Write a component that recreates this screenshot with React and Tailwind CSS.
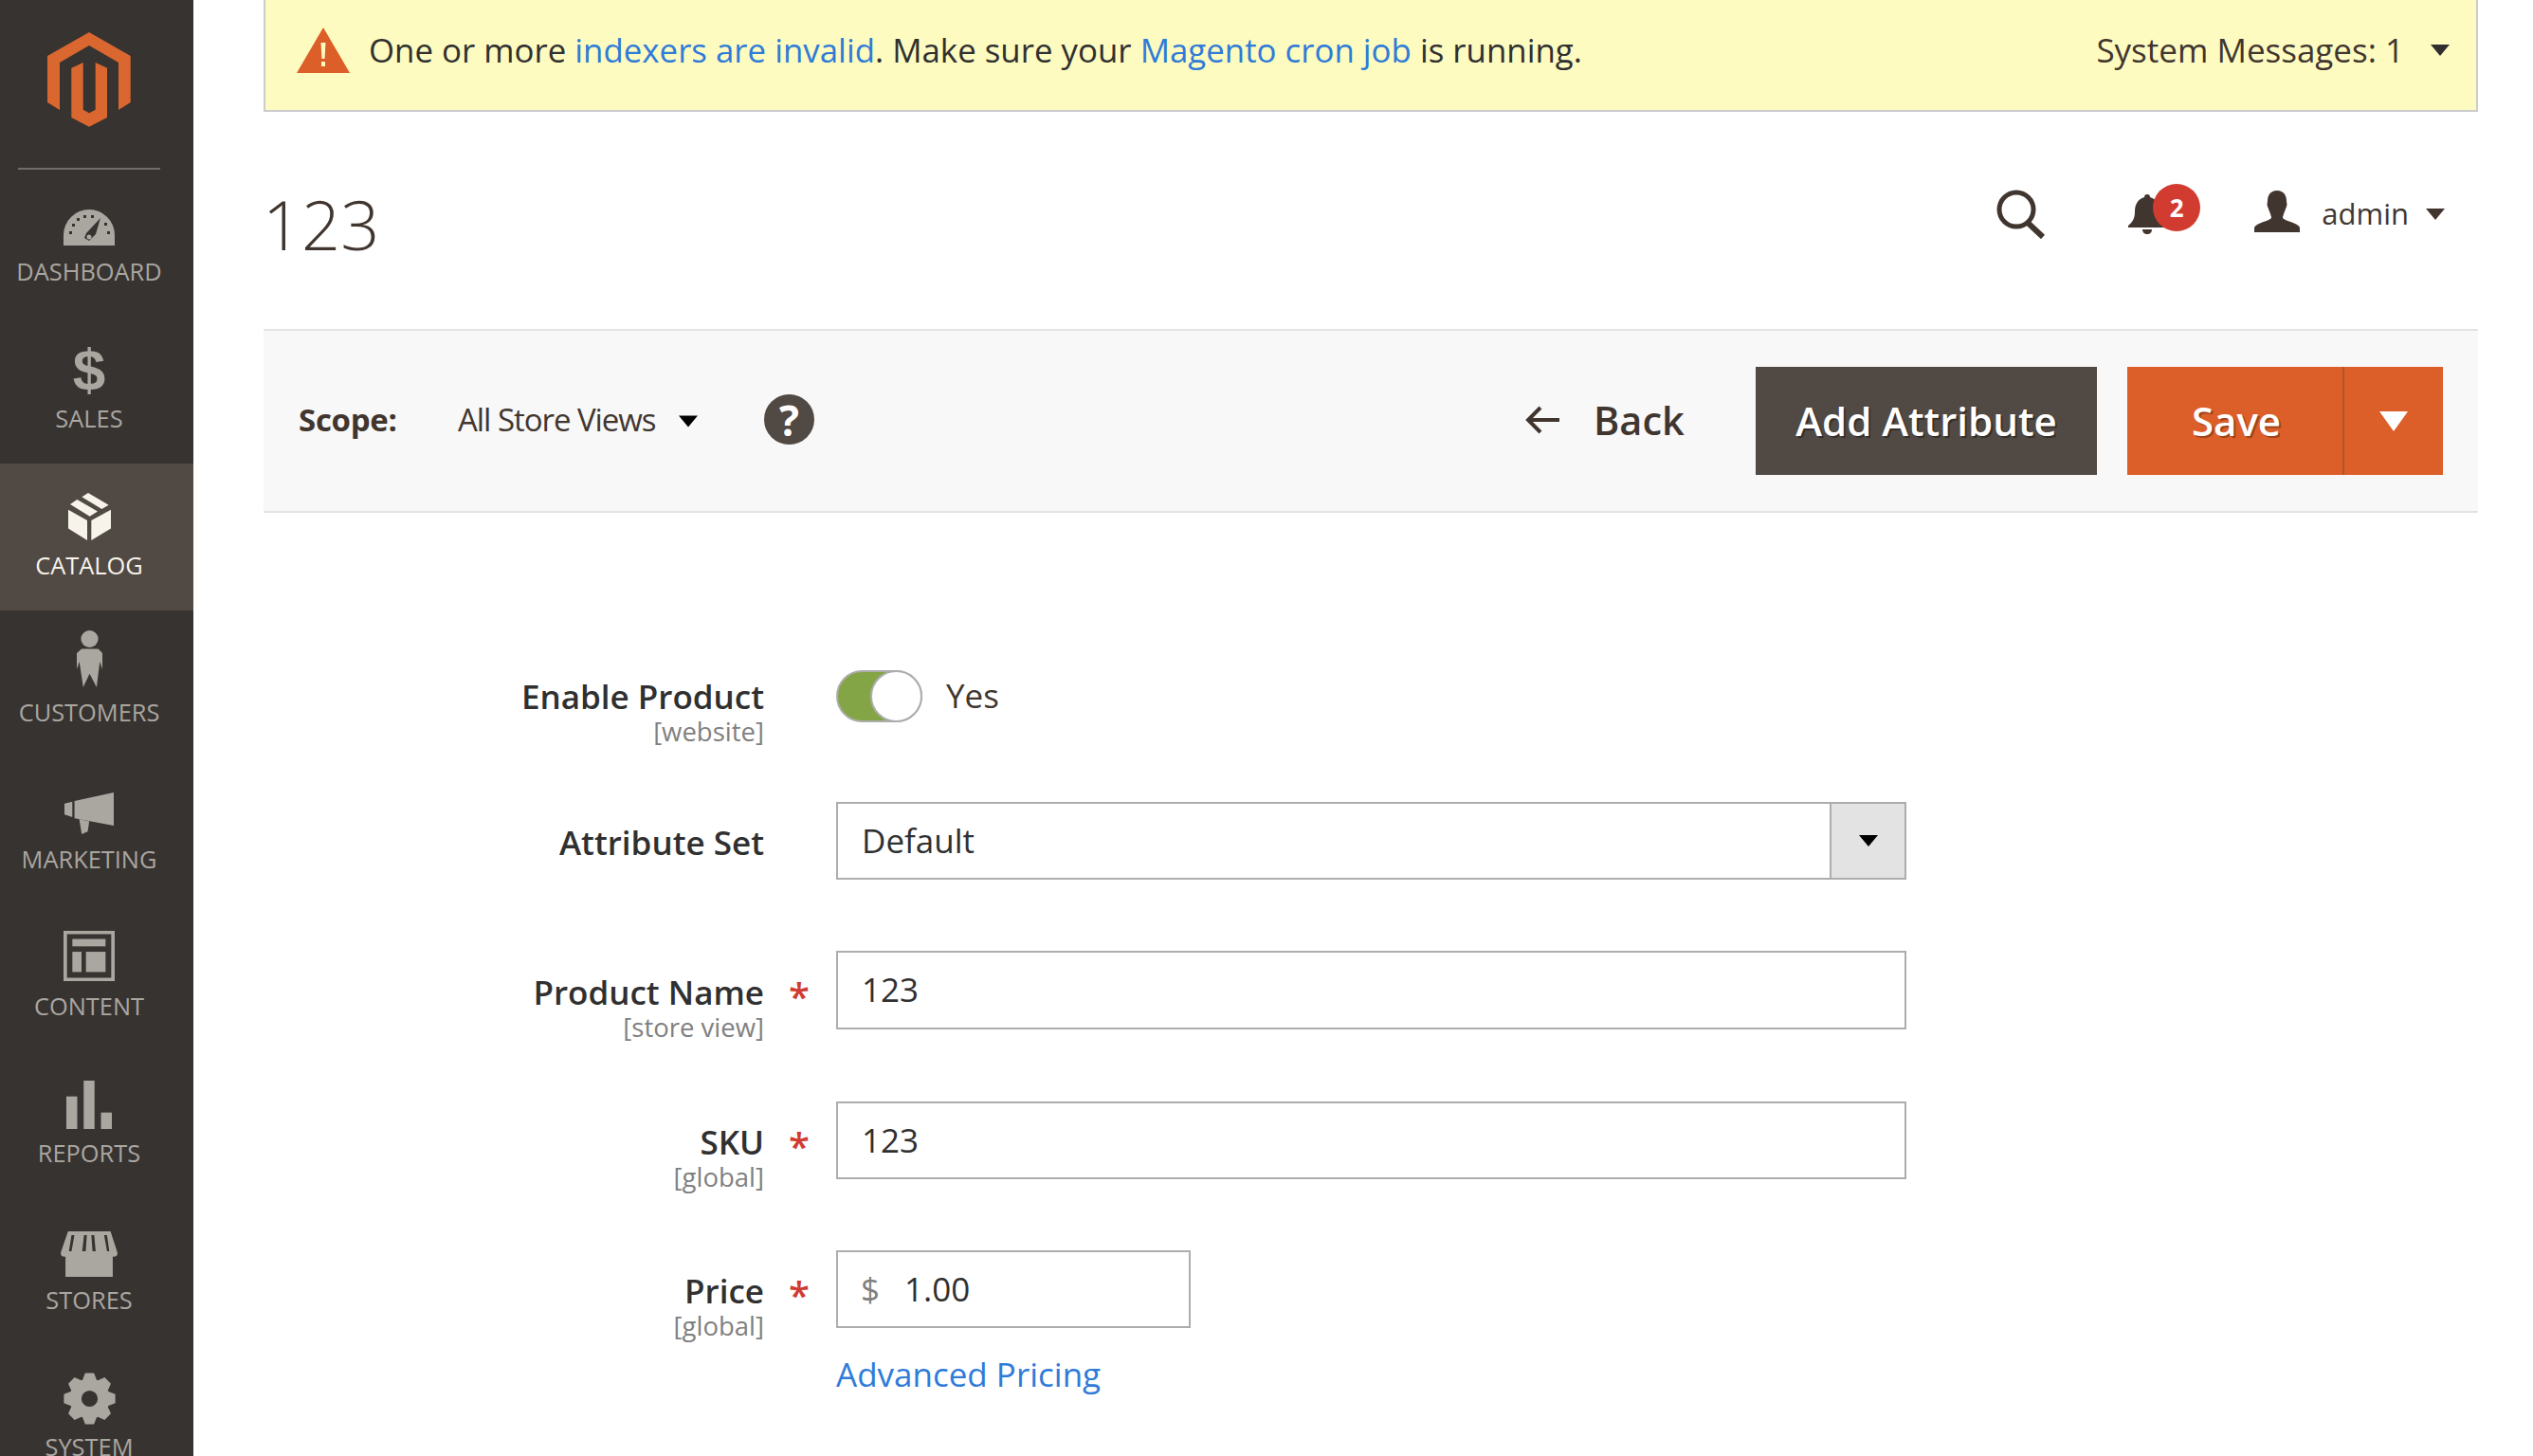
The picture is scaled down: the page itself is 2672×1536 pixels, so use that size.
import React from 'react';

const gearPoints = () => {
  const pts = [];
  const cx = 83;
  const cy = 83;
  for (let i = 0; i < 8; i++) {
    const a = (i * Math.PI) / 4 - Math.PI / 2;
    const add = (r, d) => {
      const x = cx + r * Math.cos(a + d);
      const y = cy + r * Math.sin(a + d);
      pts.push(`${x.toFixed(1)},${y.toFixed(1)}`);
    };
    add(64, -0.36);
    add(83, -0.17);
    add(83, 0.17);
    add(64, 0.36);
  }
  return pts.join(' ');
};

const Logo = () => (
  <svg width="88" height="100" viewBox="50 34 88 100" fill="#d9672f">
    <polygon points="94,34 137.7,59 137.7,108 125,116 125,66 94,48 63,66 63,116 50,108 50,59" />
    <polygon points="75.3,71.7 87.7,66 87.7,115.7 94,119.3 100.7,115.7 100.7,66 113,71.7 113,124 94,133.7 75.3,124" />
  </svg>
);

const DashboardIcon = ({ c }) => (
  <svg width="54" height="38" viewBox="0 0 54 38">
    <path fill={c} d="M0 38V27A27 27 0 0 1 54 27V38Z" />
    <g fill="#373330">
      <rect x="6" y="23" width="3" height="3" />
      <rect x="9" y="15" width="3" height="3" />
      <rect x="14" y="9" width="3" height="3" />
      <rect x="21" y="6" width="3" height="3" />
      <rect x="29" y="6" width="3" height="3" />
      <rect x="43" y="14" width="3" height="3" />
      <rect x="46" y="23" width="3" height="3" />
      <polygon points="39,9 34,26 27,33 22,30 24,25" />
    </g>
    <circle cx="27" cy="29" r="2.5" fill={c} />
  </svg>
);

const CatalogIcon = ({ c }) => (
  <svg width="45" height="50" viewBox="212 112 135 141" preserveAspectRatio="none" fill={c}>
    <polygon points="212,162 272,194 272,253 212,218" />
    <polygon points="285,194 347,162 347,218 285,253" />
    <polygon points="275,112 340,148 318,160 255,124" />
    <polygon points="240,132 305,167 280,182 218,146" />
  </svg>
);

const CustomersIcon = ({ c }) => (
  <svg width="27" height="60" viewBox="245 518 80 167" preserveAspectRatio="none" fill={c}>
    <ellipse cx="285" cy="543" rx="27" ry="25" />
    <polygon points="260,572 312,572 325,585 325,632 317,610 307,685 285,645 265,685 253,610 245,632 245,585" />
  </svg>
);

const MarketingIcon = ({ c }) => (
  <svg width="52" height="44" viewBox="203 997 157 123" preserveAspectRatio="none" fill={c}>
    <polygon points="235,1022 360,997 360,1095 235,1073" />
    <polygon points="203,1030 228,1024 228,1070 203,1062" />
    <polygon points="250,1075 282,1082 277,1112 258,1120" />
  </svg>
);

const ContentIcon = ({ c }) => (
  <svg width="54" height="53" viewBox="201 1406 162 149" preserveAspectRatio="none" fill={c}>
    <path fillRule="evenodd" d="M201 1406H363V1555H201ZM212 1416V1545H352V1416Z" />
    <rect x="229" y="1430" width="105" height="22" />
    <rect x="229" y="1468" width="29" height="60" />
    <rect x="272" y="1468" width="62" height="60" />
  </svg>
);

const ReportsIcon = ({ c }) => (
  <svg width="48" height="51" viewBox="211 300 142 153" preserveAspectRatio="none" fill={c}>
    <rect x="211" y="350" width="34" height="103" />
    <rect x="265" y="300" width="34" height="153" />
    <rect x="319" y="401" width="34" height="52" />
  </svg>
);

const StoresIcon = ({ c }) => (
  <svg width="60" height="48" viewBox="192 778 178 142" preserveAspectRatio="none">
    <polygon fill={c} points="207,840 355,840 355,920 207,920" />
    <path fill={c} d="M215 778H348L370 845Q370 857 358 857Q347 857 345 845L337 790H328L338 845Q338 857 322 857Q305 857 302 845L297 790H288L292 845Q292 857 281 857Q270 857 270 845L274 790H265L259 845Q258 857 243 857Q226 857 225 845L235 790H226L217 845Q215 857 204 857Q192 857 192 845Z" />
  </svg>
);

const SystemIcon = ({ c }) => (
  <svg width="55" height="55" viewBox="0 0 166 166">
    <path fill={c} fillRule="evenodd" d={`M${gearPoints().split(' ').join('L')}Z M57 83a26 26 0 1 0 52 0a26 26 0 1 0 -52 0Z`} />
  </svg>
);

const SalesIcon = ({ c }) => (
  <span
    className="font-['Liberation_Sans',sans-serif] font-bold text-[62px] leading-[60px] h-[60px] block"
    style={{ color: c }}
  >
    $
  </span>
);

const navItems = [
  { label: 'DASHBOARD', Icon: DashboardIcon, box: 'h-[80px]', gap: 'mt-[10px]' },
  { label: 'SALES', Icon: SalesIcon, box: 'h-[86px]', gap: 'mt-[4px]' },
  { label: 'CATALOG', Icon: CatalogIcon, box: 'h-[81px]', gap: 'mt-[9px]', active: true },
  { label: 'CUSTOMERS', Icon: CustomersIcon, box: 'h-[81px]', gap: 'mt-[9px]' },
  { label: 'MARKETING', Icon: MarketingIcon, box: 'h-[81px]', gap: 'mt-[9px]' },
  { label: 'CONTENT', Icon: ContentIcon, box: 'h-[81px]', gap: 'mt-[9px]' },
  { label: 'REPORTS', Icon: ReportsIcon, box: 'h-[82px]', gap: 'mt-[8px]' },
  { label: 'STORES', Icon: StoresIcon, box: 'h-[83px]', gap: 'mt-[7px]' },
  { label: 'SYSTEM', Icon: SystemIcon, box: 'h-[84px]', gap: 'mt-[6px]' },
];

const Caret = ({ className }) => (
  <svg className={className} viewBox="0 0 20 12" fill="currentColor">
    <polygon points="0,0 20,0 10,12" />
  </svg>
);

const Sidebar = () => (
  <aside className="w-[204px] shrink-0 bg-[#373330]">
    <div className="h-[179px] pt-[34px] pl-[50px] pr-[35px] flex flex-col">
      <Logo />
      <div className="mt-auto -ml-[31px] w-[150px] h-[2px] bg-[#736d68]" />
    </div>
    {navItems.map(({ label, Icon, box, gap, active }) => (
      <div
        key={label}
        className={`h-[155px] pr-[16px] flex flex-col items-center ${active ? 'bg-[#514943] text-[#f7f3eb]' : 'text-[#aaa6a0]'}`}
      >
        <div className={`${box} flex items-end justify-center`}>
          <Icon c={active ? '#f7f3eb' : '#aaa6a0'} />
        </div>
        <span className={`text-[25.4px] leading-[34px] ${gap}`}>{label}</span>
      </div>
    ))}
  </aside>
);

const Notice = () => (
  <div className="h-[118px] flex items-center justify-between bg-[#fdfbc0] border-x-2 border-b-2 border-[#cccccc] pl-[33px] pr-[28px] pb-[10px]">
    <div className="flex items-center">
      <svg width="56" height="48" viewBox="0 0 56 48" className="mr-[20px]">
        <polygon fill="#dc5e28" points="28,0 56,48 0,48" />
        <polygon fill="#fdfbc0" points="25.5,16 30.5,16 29.5,33 26.5,33" />
        <rect x="26" y="36" width="4" height="5" fill="#fdfbc0" />
      </svg>
      <p className="text-[34.85px] text-[#303030]">
        One or more <a className="text-[#2f7bd8]">indexers are invalid</a>. Make sure your{' '}
        <a className="text-[#2f7bd8]">Magento cron job</a> is running.
      </p>
    </div>
    <div className="flex items-center text-[#41362f]">
      <span className="text-[35px]">System Messages: 1</span>
      <Caret className="w-[20px] h-[12px] ml-[28px] text-[#303030]" />
    </div>
  </div>
);

const PageHeader = () => (
  <div className="h-[229px] flex justify-between -ml-[1px] pr-[35px]">
    <h1 className="text-[72px] font-[350] text-[#41362f] leading-[100px] mt-[68px]">123</h1>
    <div className="flex items-start pt-[77px] text-[#41362f]">
      <svg width="52" height="52" viewBox="0 0 52 52" className="mt-[5px]" fill="none" stroke="currentColor">
        <circle cx="21" cy="21" r="18" strokeWidth="5" />
        <path d="M32 34L49 50" strokeWidth="6" />
      </svg>
      <div className="relative ml-[87px] mt-[10px] w-[40px] h-[42px]">
        <svg width="40" height="42" viewBox="0 0 40 42" fill="currentColor">
          <path d="M20 0C22 0 23 1 23 3C30 5 33 11 33 18C33 25 35 29 40 33V35H0V33C5 29 7 25 7 18C7 11 10 5 17 3C17 1 18 0 20 0Z" />
          <path d="M15 37H25C25 40 23 42 20 42C17 42 15 40 15 37Z" />
        </svg>
        <span className="absolute left-[26px] -top-[11px] w-[50px] h-[50px] rounded-full bg-[#d13b30] text-white font-bold text-[26px] flex items-center justify-center">
          2
        </span>
      </div>
      <svg width="48" height="44" viewBox="0 0 48 44" className="ml-[93px] mt-[6px]" fill="currentColor">
        <path d="M24 0C31 0 34 5 34 11C34 13 35 14 34 17C33 19 33 20 32 22C31 25 30 27 30 29C32 32 46 34 48 39V44H0V39C2 34 16 32 18 29C18 27 17 25 16 22C15 20 15 19 14 17C13 14 14 13 14 11C14 5 17 0 24 0Z" />
      </svg>
      <span className="ml-[23px] text-[31px] leading-[40px] mt-[10px]">admin</span>
      <Caret className="w-[20px] h-[12px] ml-[18px] mt-[25px]" />
    </div>
  </div>
);

const Toolbar = () => (
  <div className="h-[194px] flex items-center justify-between bg-[#f8f8f8] border-y-2 border-[#e3e3e3] pl-[37px] pr-[37px] text-[#41362f]">
    <div className="flex items-center">
      <span className="text-[33px] font-bold w-[168px] tracking-[-0.3px] -mt-[3px]">Scope:</span>
      <span className="text-[33px] tracking-[-1.05px] w-[207px] -mt-[3px] whitespace-nowrap">All Store Views</span>
      <Caret className="w-[20px] h-[13px] ml-[26px] mt-[1px] text-black" />
      <span className="ml-[70px] -mt-[3px] w-[53px] h-[53px] rounded-full bg-[#514943] text-white font-bold text-[44px] flex items-center justify-center">
        ?
      </span>
    </div>
    <div className="flex items-center">
      <svg width="36" height="30" viewBox="0 0 36 30" fill="none" stroke="currentColor" strokeWidth="4" className="-mt-[2px]">
        <path d="M36 15H4M16 2L3 15L16 28" />
      </svg>
      <span className="ml-[36px] text-[41.5px] font-semibold w-[171px] -mt-[2px]">Back</span>
      <button className="h-[114px] w-[360px] pb-[2px] bg-[#514943] text-white text-[42px] font-semibold [text-shadow:2px_2px_0_rgba(0,0,0,0.35)]">
        Add Attribute
      </button>
      <div className="ml-[32px] h-[114px] flex bg-[#dc5e28] text-white">
        <button className="w-[229px] pb-[2px] pl-[3px] text-[42px] font-semibold [text-shadow:2px_2px_0_rgba(0,0,0,0.3)] border-r-2 border-[#b3552a]">
          Save
        </button>
        <span className="w-[104px] flex items-center justify-center">
          <svg width="30" height="21" viewBox="0 0 30 21" fill="currentColor">
            <polygon points="0,0 30,0 15,21" />
          </svg>
        </span>
      </div>
    </div>
  </div>
);

const Row = ({ label, scope, required, top, pt, children }) => (
  <div className={`flex ${top}`}>
    <div className={`w-[528px] shrink-0 text-right ${pt}`}>
      <div className="text-[35px] leading-[40px] font-semibold text-[#303030]">{label}</div>
      {scope && <div className="text-[27.5px] leading-[33px] text-[#808080]">{scope}</div>}
    </div>
    <div className={`w-[76px] shrink-0 pl-[26px] ${pt} text-[40px] leading-[48px] font-semibold text-[#d13b30]`}>
      {required ? '*' : ''}
    </div>
    {children}
  </div>
);

const fieldCls =
  'h-[82px] border-2 border-[#adadad] flex items-center text-[35px] text-[#303030] bg-white';

const Form = () => (
  <div>
    <Row label="Enable Product" scope="[website]" top="mt-[166px]" pt="pt-[8px]">
      <div className="flex items-center h-[55px]">
        <div className="relative w-[91px] h-[55px] rounded-full bg-[#84a546] border-2 border-[#adadad]">
          <span className="absolute right-[-2px] top-[-2px] w-[55px] h-[55px] rounded-full bg-white border-2 border-[#adadad]" />
        </div>
        <span className="ml-[25px] text-[35px] text-[#41362f]">Yes</span>
      </div>
    </Row>
    <Row label="Attribute Set" top="mt-[58px]" pt="pt-[23px]">
      <div className={`${fieldCls} w-[1129px] pl-[25px] justify-between`}>
        <span>Default</span>
        <span className="w-[79px] h-full bg-[#e3e3e3] border-l-2 border-[#adadad] flex items-center justify-center">
          <Caret className="w-[20px] h-[12px] text-black" />
        </span>
      </div>
    </Row>
    <Row label="Product Name" scope="[store view]" required top="mt-[75px]" pt="pt-[24px]">
      <div className={`${fieldCls} w-[1129px] pl-[25px] !h-[83px]`}>123</div>
    </Row>
    <Row label="SKU" scope="[global]" required top="mt-[62px]" pt="pt-[23px]">
      <div className={`${fieldCls} w-[1129px] pl-[25px]`}>123</div>
    </Row>
    <Row label="Price" scope="[global]" required top="mt-[61px]" pt="pt-[23px]">
      <div>
        <div className={`${fieldCls} w-[374px] pl-[24px]`}>
          <span className="text-[#808080] mr-[26px]">$</span>1.00
        </div>
        <a className="block mt-[27px] text-[35px] leading-[44px] text-[#2f7bd8]">Advanced Pricing</a>
      </div>
    </Row>
  </div>
);

export default function App() {
  return (
    <div className="h-screen overflow-hidden flex bg-white font-['Open_Sans',sans-serif]">
      <Sidebar />
      <main className="flex-1 pl-[74px] pr-[58px]">
        <Notice />
        <PageHeader />
        <Toolbar />
        <Form />
      </main>
    </div>
  );
}
